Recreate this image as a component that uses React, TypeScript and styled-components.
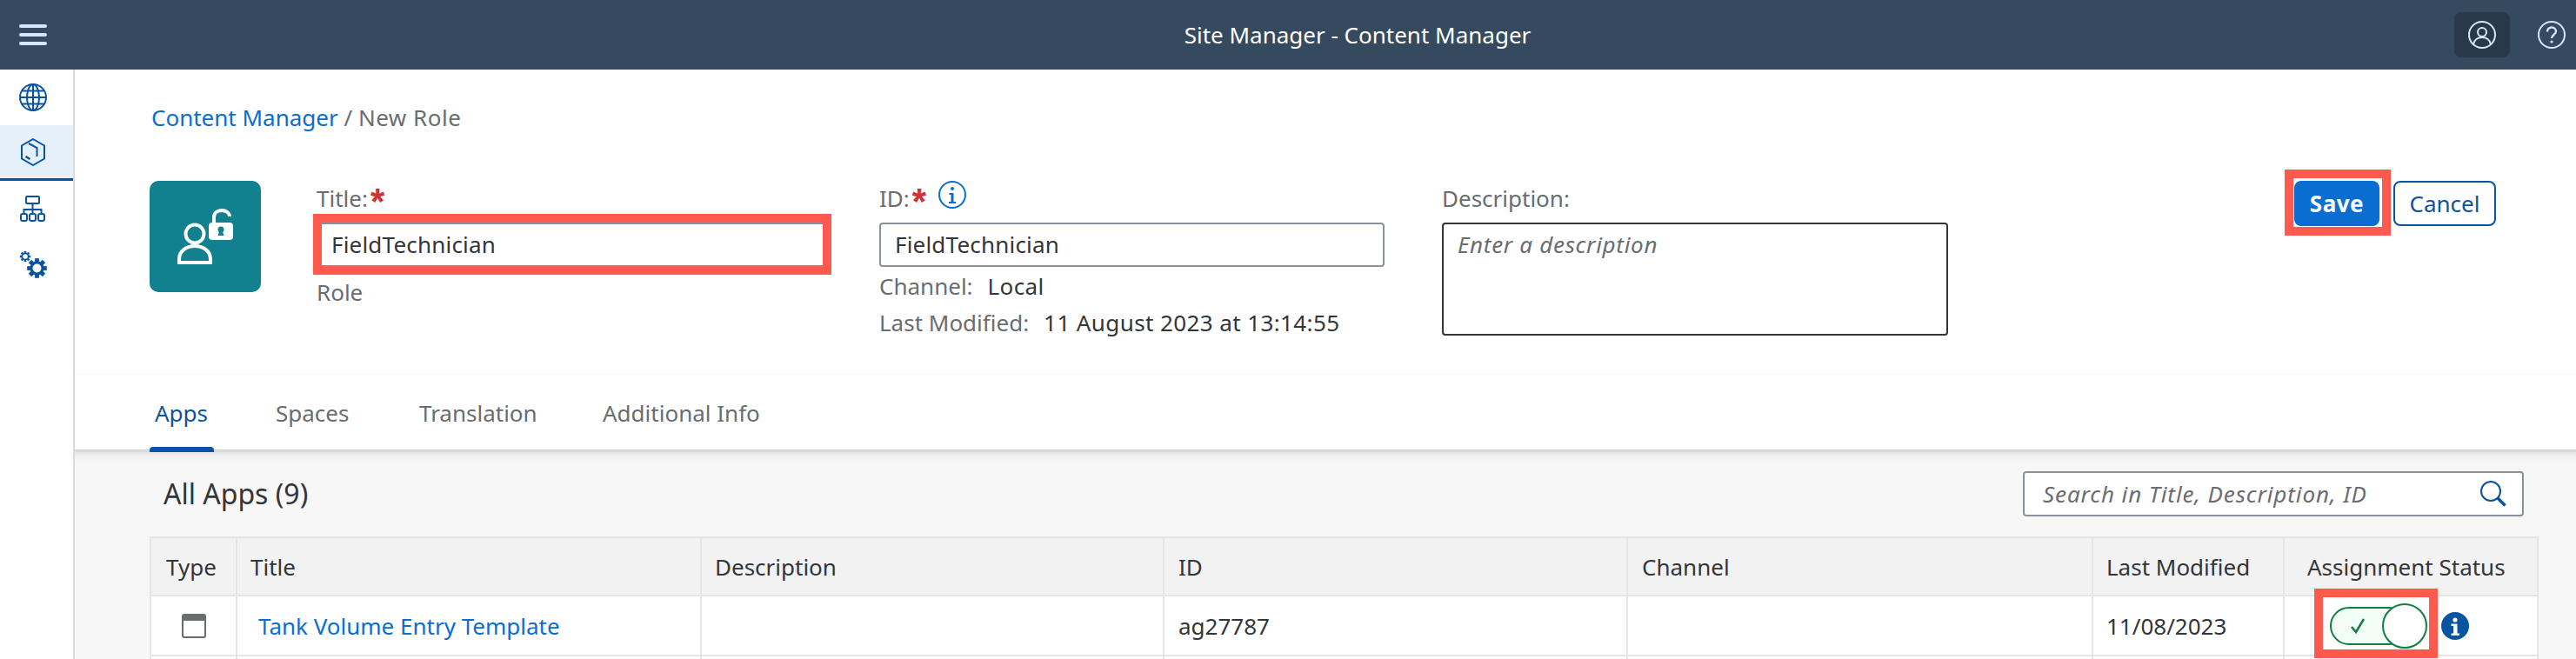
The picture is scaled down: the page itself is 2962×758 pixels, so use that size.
import React from "react";
import styled, { createGlobalStyle } from "styled-components";

const Global = createGlobalStyle`
  html, body { margin: 0; padding: 0; background: #fff; }
  body { font-family: "Noto Sans", "Open Sans", sans-serif; color: #32363a; }
  #root { width: 2962px; height: 758px; overflow: hidden; }
  * { box-sizing: border-box; }
`;

const Page = styled.div`
  width: 2962px;
  height: 758px;
  display: flex;
  flex-direction: column;
  overflow: hidden;
`;
const ShellBar = styled.header`
  height: 80px;
  flex: none;
  background: #354a5f;
  display: flex;
  align-items: center;
  padding-left: 22px;
  position: relative;
`;
const ShellTitle = styled.div`
  position: absolute;
  left: 160px;
  right: 0;
  text-align: center;
  color: #fff;
  font-size: 26px;
  font-weight: 400;
  pointer-events: none;
`;
const ShellActions = styled.div`
  margin-left: auto;
  display: flex;
  align-items: center;
  padding-right: 12px;
  gap: 32px;
`;
const ShellButton = styled.div<{ $active?: boolean }>`
  width: ${(p) => (p.$active ? "64px" : "32px")};
  height: 52px;
  border-radius: 8px;
  background: ${(p) => (p.$active ? "#29394a" : "transparent")};
  display: flex;
  align-items: center;
  justify-content: center;
`;
const Body = styled.div`
  flex: 1;
  display: flex;
  min-height: 0;
`;
const Sidebar = styled.nav`
  width: 86px;
  flex: none;
  border-right: 2px solid #d9d9d9;
  background: #fff;
`;
const NavItem = styled.div<{ $active?: boolean }>`
  height: 64px;
  display: flex;
  align-items: center;
  justify-content: center;
  padding-right: 8px;
  background: ${(p) => (p.$active ? "#e5f0fa" : "transparent")};
  border-bottom: ${(p) => (p.$active ? "3px solid #0854a0" : "0")};
`;
const Main = styled.main`
  flex: 1;
  min-width: 0;
  display: flex;
  flex-direction: column;
`;
const Crumbs = styled.div`
  height: 34px;
  margin: 38px 0 0 88px;
  font-size: 26px;
  line-height: 34px;
  color: #6a6d70;
`;
const CrumbCurrent = styled.span`
  letter-spacing: 0.5px;
`;
const Link = styled.a`
  color: #0a6ed1;
`;
const Head = styled.section`
  height: 222px;
  margin-top: 56px;
  padding: 0 92px 0 86px;
  display: flex;
  align-items: flex-start;
`;
const Avatar = styled.div`
  width: 128px;
  height: 128px;
  flex: none;
  border-radius: 10px;
  background: #12818f;
  display: flex;
  align-items: center;
  justify-content: center;
  margin-right: 64px;
`;
const Field = styled.div<{ $w: number; $gap: number }>`
  width: ${(p) => p.$w}px;
  margin-right: ${(p) => p.$gap}px;
  flex: none;
`;
const LabelRow = styled.div`
  height: 48px;
  display: flex;
  align-items: flex-start;
  font-size: 26px;
  line-height: 40px;
  color: #6a6d70;
`;
const Star = styled.span`
  color: #cc3333;
  font-family: "Liberation Sans", sans-serif;
  font-weight: 700;
  font-size: 42px;
  line-height: 48px;
  margin-left: 3px;
  height: 40px;
`;
const InfoWrap = styled.span`
  margin-left: 14px;
  display: inline-flex;
`;
const InputBox = styled.div<{ $pad: number }>`
  height: 51px;
  background: #fff;
  border: 2px solid #89919a;
  border-radius: 4px;
  font-size: 26px;
  letter-spacing: 0.2px;
  line-height: 47px;
  padding-left: ${(p) => p.$pad}px;
  color: #32363a;
  position: relative;
`;
const Highlight = styled.div<{ $t: number; $r: number; $b: number; $l: number }>`
  position: absolute;
  top: ${(p) => p.$t}px;
  right: ${(p) => p.$r}px;
  bottom: ${(p) => p.$b}px;
  left: ${(p) => p.$l}px;
  border: 10px solid #ff5a4d;
  pointer-events: none;
`;
const SubText = styled.div`
  font-size: 26px;
  line-height: 42px;
  color: #6a6d70;
  display: flex;
`;
const Value = styled.span<{ $gap: number }>`
  color: #32363a;
  margin-left: ${(p) => p.$gap}px;
  letter-spacing: 0.4px;
`;
const RoleLine = styled(SubText)`
  margin-top: 8px;
`;
const MetaLines = styled.div`
  margin-top: 1px;
`;
const TextArea = styled.div`
  height: 130px;
  border: 2px solid #32363a;
  border-radius: 4px;
  padding: 0 16px;
  font-size: 26px;
  font-style: italic;
  letter-spacing: 0.7px;
  line-height: 47px;
  color: #6a6d70;
  background: #fff;
`;
const Actions = styled.div`
  margin-left: auto;
  display: flex;
  gap: 16px;
`;
const SaveWrap = styled.div`
  position: relative;
`;
const Btn = styled.button<{ $primary?: boolean; $w: number }>`
  width: ${(p) => p.$w}px;
  height: 52px;
  border-radius: 8px;
  border: 2px solid ${(p) => (p.$primary ? "#0a6ed1" : "#0854a0")};
  background: ${(p) => (p.$primary ? "#0a6ed1" : "#fff")};
  color: ${(p) => (p.$primary ? "#fff" : "#0854a0")};
  font-family: inherit;
  font-size: 26px;
  font-weight: ${(p) => (p.$primary ? 700 : 400)};
  letter-spacing: ${(p) => (p.$primary ? "0.5px" : "0")};
  padding: 0;
`;
const Tabs = styled.div`
  height: 90px;
  flex: none;
  border-bottom: 3px solid #d9d9d9;
  border-top: 1px solid #fafafa;
  padding-left: 86px;
  display: flex;
  position: relative;
`;
const Tab = styled.div<{ $active?: boolean; $w: number }>`
  width: ${(p) => p.$w}px;
  flex: none;
  height: 87px;
  padding: 26px 0 0 6px;
  font-size: 26px;
  line-height: 36px;
  color: ${(p) => (p.$active ? "#0854a0" : "#6a6d70")};
  position: relative;
`;
const TabMark = styled.div`
  position: absolute;
  left: 0;
  top: 83px;
  width: 74px;
  height: 6px;
  background: #0854a0;
  border-radius: 4px 4px 0 0;
`;
const Panel = styled.section`
  flex: 1;
  min-height: 0;
  background: #f7f7f7;
  padding: 0 45px 0 86px;
  box-shadow: inset 0 10px 10px -8px rgba(0, 0, 0, 0.1);
  overflow: hidden;
`;
const PanelBar = styled.div`
  height: 97px;
  display: flex;
  align-items: flex-start;
  justify-content: space-between;
  padding: 22px 15px 0 16px;
`;
const PanelTitle = styled.h2`
  margin: 0;
  font-weight: 400;
  font-size: 32px;
  line-height: 52px;
  color: #32363a;
`;
const Search = styled.div`
  width: 576px;
  height: 52px;
  background: #fff;
  border: 2px solid #89919a;
  border-radius: 4px;
  font-size: 26px;
  font-style: italic;
  letter-spacing: 0.9px;
  color: #6a6d70;
  display: flex;
  align-items: center;
  justify-content: space-between;
  padding: 0 18px 0 21px;
`;
const Table = styled.table`
  width: 2745px;
  table-layout: fixed;
  border-collapse: collapse;
  font-size: 26px;
  background: #fff;
`;
const Th = styled.th<{ $w: number; $pad?: number }>`
  width: ${(p) => p.$w}px;
  height: 67px;
  background: #f2f2f2;
  border: 2px solid #e5e5e5;
  font-weight: 400;
  text-align: left;
  padding: 0 0 0 ${(p) => p.$pad ?? 15}px;
  color: #32363a;
`;
const Td = styled.td<{ $pad?: number }>`
  height: 69px;
  border: 2px solid #e5e5e5;
  padding: 0 0 0 ${(p) => p.$pad ?? 15}px;
  color: #32363a;
  background: #fff;
  white-space: nowrap;
`;
const IconCell = styled.div`
  display: flex;
  justify-content: center;
`;
const StatusCell = styled.div`
  display: flex;
  align-items: center;
  padding-left: 52px;
`;
const ToggleWrap = styled.div`
  position: relative;
  width: 112px;
  height: 52px;
  flex: none;
  display: flex;
  align-items: center;
`;
const Track = styled.div`
  width: 90px;
  height: 44px;
  border: 2px solid #107e3e;
  border-radius: 22px;
  background: #f1fdf6;
  display: flex;
  align-items: center;
  padding-left: 20px;
`;
const Knob = styled.div`
  position: absolute;
  left: 60px;
  top: 0;
  width: 52px;
  height: 52px;
  border-radius: 50%;
  border: 2px solid #107e3e;
  background: #fff;
`;
const InfoDot = styled.span`
  margin-left: 16px;
  display: inline-flex;
`;

const Burger = () => (
  <svg width="32" height="24" viewBox="0 0 32 24" fill="#d1e8ff">
    <rect y="0" width="32" height="4" rx="2" />
    <rect y="10" width="32" height="4" rx="2" />
    <rect y="20" width="32" height="4" rx="2" />
  </svg>
);
const UserIcon = () => (
  <svg width="32" height="32" viewBox="0 0 32 32" fill="none" stroke="#d1e8ff" strokeWidth="2">
    <circle cx="16" cy="16" r="15" />
    <circle cx="16" cy="13" r="5" />
    <path d="M6 27c1-5 5-8 10-8s9 3 10 8" />
  </svg>
);
const HelpIcon = () => (
  <svg width="32" height="32" viewBox="0 0 32 32" fill="none" stroke="#d1e8ff" strokeWidth="2">
    <circle cx="16" cy="16" r="15" />
    <path d="M11 12.500c0-3 2.200-5 5-5s5 2 5 4.600c0 3.900-5 4-5 8" strokeWidth="2.400" />
    <circle cx="16" cy="24" r="1.600" fill="#d1e8ff" stroke="none" />
  </svg>
);
const GlobeIcon = () => (
  <svg width="32" height="32" viewBox="0 0 32 32" fill="none" stroke="#0854a0" strokeWidth="2">
    <circle cx="16" cy="16" r="15" />
    <ellipse cx="16" cy="16" rx="7" ry="15" />
    <path d="M16 1v30M1 16h30M3.500 8.500h25M3.500 23.500h25" />
  </svg>
);
const CubeIcon = () => (
  <svg width="30" height="32" viewBox="0 0 30 32" fill="none" stroke="#0854a0" strokeWidth="2">
    <path d="M15 1l13 7.500v15L15 31 2 23.500v-15z" />
    <path d="M10 6l9.500 5v10" />
    <path d="M6.500 21l5 3" strokeWidth="2.400" />
  </svg>
);
const TreeIcon = () => (
  <svg width="30" height="30" viewBox="0 0 30 30" fill="none" stroke="#0854a0" strokeWidth="2">
    <rect x="7" y="1" width="15" height="8" rx="1" />
    <path d="M14.500 9v12M4.500 21v-5h20v5" />
    <rect x="1" y="21" width="7" height="8" rx="2" />
    <rect x="11" y="21" width="7" height="8" rx="2" />
    <rect x="21" y="21" width="7" height="8" rx="2" />
  </svg>
);
const Gear = ({ cx, cy, r, w }: { cx: number; cy: number; r: number; w: number }) => (
  <g>
    <circle cx={cx} cy={cy} r={r} fill="none" stroke="#0854a0" strokeWidth={w} />
    {[0, 45, 90, 135, 180, 225, 270, 315].map((a) => (
      <rect
        key={a}
        x={cx - w * 0.8}
        y={cy - r - w * 1.6}
        width={w * 1.6}
        height={w * 1.4}
        fill="#0854a0"
        transform={`rotate(${a} ${cx} ${cy})`}
      />
    ))}
  </g>
);
const GearsIcon = () => (
  <svg width="32" height="32" viewBox="0 0 32 32">
    <Gear cx={7} cy={7} r={3.6} w={1.6} />
    <Gear cx={20.5} cy={20.5} r={6.5} w={3} />
  </svg>
);
const RoleIcon = () => (
  <svg width="64" height="64" viewBox="0 0 64 64" fill="none">
    <g stroke="#fff" strokeWidth="4">
      <circle cx="20" cy="29" r="10.500" />
      <path d="M2 62V58c0-9 8-15 18-15s18 6 18 15v4z" />
      <path d="M42 16V10c0-5 4-8 9-8s9 3 9 7" />
    </g>
    <rect x="36" y="16" width="28" height="20" rx="4" fill="#fff" />
    <circle cx="50" cy="24" r="3.500" fill="#12818f" />
    <path d="M48.500 25h3l2 6h-7z" fill="#12818f" />
  </svg>
);
const InfoOutline = () => (
  <svg width="32" height="32" viewBox="0 0 32 32" fill="none">
    <circle cx="16" cy="16" r="15" stroke="#0a6ed1" strokeWidth="2" />
    <circle cx="16" cy="9" r="2" fill="#0a6ed1" />
    <path d="M12.500 14h5v10h2.500v2h-8v-2h2.500v-8h-2z" fill="#0a6ed1" />
  </svg>
);
const InfoSolid = () => (
  <svg width="32" height="32" viewBox="0 0 32 32">
    <circle cx="16" cy="16" r="16" fill="#0854a0" />
    <circle cx="16" cy="9" r="2.600" fill="#fff" />
    <path d="M11.500 13.500h7v11h2.500V27H11.500v-2.500H14V16h-2.500z" fill="#fff" />
  </svg>
);
const SearchIcon = () => (
  <svg width="30" height="30" viewBox="0 0 30 30" fill="none" stroke="#0854a0">
    <circle cx="12" cy="12" r="11" strokeWidth="2" />
    <path d="M20 20l8.500 8.500" strokeWidth="3.500" />
  </svg>
);
const WindowIcon = () => (
  <svg width="28" height="28" viewBox="0 0 28 28">
    <rect x="1" y="1" width="26" height="26" rx="2" fill="#fff" stroke="#6a6d70" strokeWidth="2" />
    <path d="M2 1h24a1 1 0 0 1 1 1v6H1V2a1 1 0 0 1 1-1z" fill="#6a6d70" />
  </svg>
);
const Check = () => (
  <svg width="20" height="20" viewBox="0 0 20 20" fill="none" stroke="#107e3e" strokeWidth="2.500">
    <path d="M3 11l5 6L17 2" />
  </svg>
);

const columns = [
  { label: "Type", w: 99, pad: 17 },
  { label: "Title", w: 534, pad: 15 },
  { label: "Description", w: 532, pad: 15 },
  { label: "ID", w: 533, pad: 16 },
  { label: "Channel", w: 535, pad: 16 },
  { label: "Last Modified", w: 220, pad: 15 },
  { label: "Assignment Status", w: 292, pad: 26 },
];

export default function App() {
  return (
    <Page>
      <Global />
      <ShellBar>
        <Burger />
        <ShellTitle>Site Manager - Content Manager</ShellTitle>
        <ShellActions>
          <ShellButton $active>
            <UserIcon />
          </ShellButton>
          <ShellButton>
            <HelpIcon />
          </ShellButton>
        </ShellActions>
      </ShellBar>
      <Body>
        <Sidebar>
          <NavItem><GlobeIcon /></NavItem>
          <NavItem $active><CubeIcon /></NavItem>
          <NavItem><TreeIcon /></NavItem>
          <NavItem><GearsIcon /></NavItem>
        </Sidebar>
        <Main>
          <Crumbs>
            <Link>Content Manager</Link> / <CrumbCurrent>New Role</CrumbCurrent>
          </Crumbs>
          <Head>
            <Avatar><RoleIcon /></Avatar>
            <Field $w={588} $gap={59}>
              <LabelRow>Title:<Star>*</Star></LabelRow>
              <InputBox $pad={15}>
                FieldTechnician
                <Highlight $t={-12} $r={-6} $b={-11} $l={-6} />
              </InputBox>
              <RoleLine>Role</RoleLine>
            </Field>
            <Field $w={581} $gap={66}>
              <LabelRow>
                ID:<Star>*</Star>
                <InfoWrap><InfoOutline /></InfoWrap>
              </LabelRow>
              <InputBox $pad={16}>FieldTechnician</InputBox>
              <MetaLines>
                <SubText>Channel:<Value $gap={17}>Local</Value></SubText>
                <SubText>Last Modified:<Value $gap={17}>11 August 2023 at 13:14:55</Value></SubText>
              </MetaLines>
            </Field>
            <Field $w={582} $gap={0}>
              <LabelRow>Description:</LabelRow>
              <TextArea>Enter a description</TextArea>
            </Field>
            <Actions>
              <SaveWrap>
                <Btn $primary $w={98}>Save</Btn>
                <Highlight $t={-13} $r={-13} $b={-11} $l={-11} />
              </SaveWrap>
              <Btn $w={118}>Cancel</Btn>
            </Actions>
          </Head>
          <Tabs>
            <Tab $active $w={139}>Apps<TabMark /></Tab>
            <Tab $w={165}>Spaces</Tab>
            <Tab $w={211}>Translation</Tab>
            <Tab $w={220}>Additional Info</Tab>
          </Tabs>
          <Panel>
            <PanelBar>
              <PanelTitle>All Apps (9)</PanelTitle>
              <Search>
                Search in Title, Description, ID
                <SearchIcon />
              </Search>
            </PanelBar>
            <Table>
              <thead>
                <tr>
                  {columns.map((c) => (
                    <Th key={c.label} $w={c.w} $pad={c.pad}>{c.label}</Th>
                  ))}
                </tr>
              </thead>
              <tbody>
                <tr>
                  <Td $pad={0}><IconCell><WindowIcon /></IconCell></Td>
                  <Td $pad={24}><Link>Tank Volume Entry Template</Link></Td>
                  <Td />
                  <Td $pad={16}>ag27787</Td>
                  <Td />
                  <Td>11/08/2023</Td>
                  <Td $pad={0}>
                    <StatusCell>
                      <ToggleWrap>
                        <Track><Check /></Track>
                        <Knob />
                        <Highlight $t={-17} $r={-12} $b={-11} $l={-18} />
                      </ToggleWrap>
                      <InfoDot><InfoSolid /></InfoDot>
                    </StatusCell>
                  </Td>
                </tr>
                <tr>
                  {columns.map((c) => (
                    <Td key={c.label} />
                  ))}
                </tr>
              </tbody>
            </Table>
          </Panel>
        </Main>
      </Body>
    </Page>
  );
}
